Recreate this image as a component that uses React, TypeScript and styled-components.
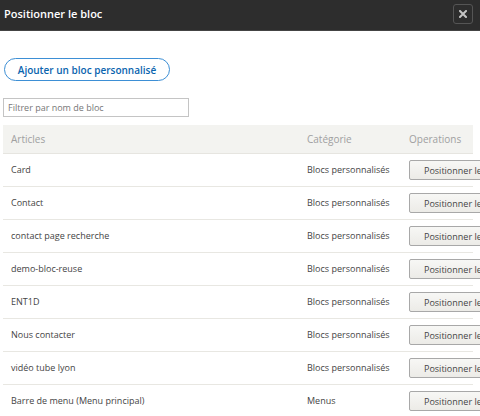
import React from "react";
import styled, { createGlobalStyle } from "styled-components";

const GlobalStyle = createGlobalStyle`
  html, body {
    margin: 0;
    padding: 0;
    background: #fff;
    overflow: hidden;
  }
  body {
    font-family: "Open Sans", "DejaVu Sans", sans-serif;
    color: #333;
  }
`;

const Dialog = styled.div`
  width: 480px;
  height: 416px;
  overflow: hidden;
  background: #fff;
`;

const TitleBar = styled.div`
  height: 30px;
  background: #2d2d2d;
  border-bottom: 1px solid #444;
  display: flex;
  align-items: center;
  justify-content: space-between;
  padding: 0 7px 0 4px;
`;

const Title = styled.h1`
  margin: 0;
  color: #fff;
  font-size: 11px;
  font-weight: 600;
  position: relative;
  top: -2px;
`;

const CloseButton = styled.button`
  width: 20px;
  height: 20px;
  padding: 0;
  margin-top: -3px;
  border: 1px solid #555;
  border-radius: 3px;
  background: #2d2d2d;
  display: flex;
  align-items: center;
  justify-content: center;
`;

const Content = styled.div`
  padding: 27px 0 0 3px;
  display: flex;
  flex-direction: column;
  align-items: flex-start;
`;

const AddButton = styled.button`
  margin-left: 1px;
  width: 166px;
  height: 23px;
  border: 1px solid #3d8fd5;
  border-radius: 12px;
  background: #fff;
  color: #0a64ae;
  font-family: "Open Sans", sans-serif;
  font-size: 10px;
  font-weight: 600;
  padding: 0;
`;

const FilterInput = styled.input`
  margin-top: 17px;
  width: 186px;
  height: 19px;
  box-sizing: border-box;
  border: 1px solid #c4c4c4;
  padding: 0 4px;
  font-family: "Open Sans", sans-serif;
  font-size: 9px;
  color: #333;
  &::placeholder {
    color: #777;
  }
`;

const Table = styled.table`
  margin-top: 8px;
  width: 470px;
  border-collapse: collapse;
  table-layout: fixed;
`;

const HeadCell = styled.th<{ $w: number }>`
  width: ${(p) => p.$w}px;
  height: 28px;
  padding: 0 8px;
  background: #f3f3f0;
  color: #a0a0a0;
  font-size: 10px;
  font-weight: 400;
  text-align: left;
  border-bottom: 1px solid #e6e5e0;
  box-sizing: border-box;
`;

const Row = styled.tr`
  border-bottom: 1px solid #e8e7e2;
`;

const Cell = styled.td`
  height: 32px;
  padding: 0 8px;
  font-size: 9px;
  color: #444;
  white-space: nowrap;
  overflow: visible;
`;

const PlaceButton = styled.button`
  width: 90px;
  height: 20px;
  margin-top: 1px;
  border: 1px solid #a8a8a8;
  border-radius: 2px;
  background: linear-gradient(#f7f7f5, #ecebe7);
  color: #444;
  font-family: "Open Sans", sans-serif;
  font-size: 9px;
  text-align: left;
  padding: 0 0 0 14px;
  white-space: nowrap;
`;

const blocks = [
  ["Card", "Blocs personnalisés"],
  ["Contact", "Blocs personnalisés"],
  ["contact page recherche", "Blocs personnalisés"],
  ["demo-bloc-reuse", "Blocs personnalisés"],
  ["ENT1D", "Blocs personnalisés"],
  ["Nous contacter", "Blocs personnalisés"],
  ["vidéo tube lyon", "Blocs personnalisés"],
  ["Barre de menu (Menu principal)", "Menus"],
];

export default function App() {
  return (
    <Dialog>
      <GlobalStyle />
      <TitleBar>
        <Title>Positionner le bloc</Title>
        <CloseButton aria-label="Fermer">
          <svg width="8" height="8" viewBox="0 0 8 8">
            <path d="M1 1 L7 7 M7 1 L1 7" stroke="#c4c4c4" strokeWidth="2" strokeLinecap="square" />
          </svg>
        </CloseButton>
      </TitleBar>
      <Content>
        <AddButton>Ajouter un bloc personnalisé</AddButton>
        <FilterInput placeholder="Filtrer par nom de bloc" />
        <Table>
          <thead>
            <tr>
              <HeadCell $w={296}>Articles</HeadCell>
              <HeadCell $w={102}>Catégorie</HeadCell>
              <HeadCell $w={72}>Operations</HeadCell>
            </tr>
          </thead>
          <tbody>
            {blocks.map(([name, cat]) => (
              <Row key={name}>
                <Cell>{name}</Cell>
                <Cell>{cat}</Cell>
                <Cell>
                  <PlaceButton>Positionner le bloc</PlaceButton>
                </Cell>
              </Row>
            ))}
          </tbody>
        </Table>
      </Content>
    </Dialog>
  );
}
